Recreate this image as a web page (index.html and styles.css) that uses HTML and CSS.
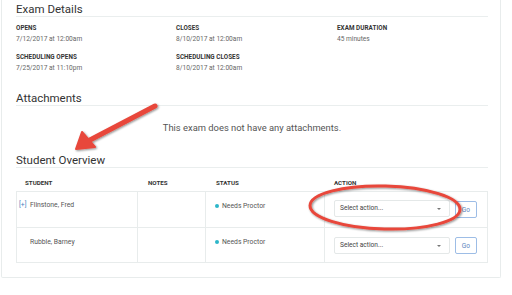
FILE: index.html
```html
<!DOCTYPE html>
<html>
<head>
<meta charset="utf-8">
<link rel="stylesheet" href="styles.css">
</head>
<body>
<div class="card">
  <section class="sec">
    <h2 class="sec-title">Exam Details</h2>
    <div class="grid">
      <div class="field"><div class="lbl">OPENS</div><div class="val">7/12/2017 at 12:00am</div></div>
      <div class="field"><div class="lbl">CLOSES</div><div class="val">8/10/2017 at 12:00am</div></div>
      <div class="field"><div class="lbl">EXAM DURATION</div><div class="val">45 minutes</div></div>
      <div class="field"><div class="lbl">SCHEDULING OPENS</div><div class="val">7/25/2017 at 11:10pm</div></div>
      <div class="field"><div class="lbl">SCHEDULING CLOSES</div><div class="val">8/10/2017 at 12:00am</div></div>
    </div>
  </section>
  <section class="sec attach">
    <h2 class="sec-title">Attachments</h2>
    <p class="empty">This exam does not have any attachments.</p>
  </section>
  <section class="sec overview">
    <h2 class="sec-title">Student Overview</h2>
    <div class="table">
      <div class="thead">
        <div class="th c1">STUDENT</div>
        <div class="th c2">NOTES</div>
        <div class="th c3">STATUS</div>
        <div class="th c4">ACTION</div>
      </div>
      <div class="tbody">
        <div class="tr">
          <div class="td c1"><span class="plus">[+]</span><span class="name">Flinstone, Fred</span></div>
          <div class="td c2"></div>
          <div class="td c3"><span class="dot"></span>Needs Proctor</div>
          <div class="td c4"><div class="select">Select action...<span class="caret"></span></div><button class="go">Go</button></div>
        </div>
        <div class="tr">
          <div class="td c1"><span class="plus blank"></span><span class="name">Rubble, Barney</span></div>
          <div class="td c2"></div>
          <div class="td c3"><span class="dot"></span>Needs Proctor</div>
          <div class="td c4"><div class="select">Select action...<span class="caret"></span></div><button class="go">Go</button></div>
        </div>
      </div>
    </div>
  </section>
</div>
<svg class="annot" width="512" height="295" viewBox="0 0 512 295">
  <defs>
    <filter id="sh" x="-20%" y="-20%" width="140%" height="140%">
      <feGaussianBlur in="SourceAlpha" stdDeviation="1"/>
      <feOffset dx="0.5" dy="1" result="b"/>
      <feComponentTransfer><feFuncA type="linear" slope="0.45"/></feComponentTransfer>
      <feMerge><feMergeNode/><feMergeNode in="SourceGraphic"/></feMerge>
    </filter>
  </defs>
  <g filter="url(#sh)">
    <line x1="155" y1="106" x2="88" y2="141" stroke="#e8473b" stroke-width="5" stroke-linecap="round"/>
    <polygon points="76,149 82,132 95,147" fill="#e8473b" stroke="#e8473b" stroke-width="2" stroke-linejoin="round"/>
  </g>
  <g filter="url(#sh)">
    <ellipse cx="385" cy="207.5" rx="75" ry="21.5" fill="none" stroke="#e8473b" stroke-width="3" transform="rotate(1.5 385 207.5)"/>
  </g>
</svg>
</body>
</html>
```
FILE: styles.css
```css
html, body {
  margin: 0;
  padding: 0;
  background: #fff;
}
body {
  font-family: Roboto, "Liberation Sans", sans-serif;
  color: #333;
  width: 512px;
  height: 295px;
  overflow: hidden;
  position: relative;
}
.card {
  margin-left: 1px;
  width: 500px;
  height: 278px;
  border: 1px solid #e8ecec;
  border-top: none;
  border-radius: 0 0 2px 2px;
  padding: 2px 13px 0 14px;
  box-sizing: border-box;
}
.sec-title {
  margin: 0;
  font-size: 11.5px;
  font-weight: 400;
  line-height: 14px;
  color: #333;
  border-bottom: 1px solid #eaeeee;
  width: 472px;
}
.grid {
  display: grid;
  grid-template-columns: 160px 161px auto;
  row-gap: 7px;
  padding-top: 6px;
}
.lbl {
  font-size: 6.3px;
  font-weight: 700;
  line-height: 10px;
  color: #333;
  letter-spacing: 0.05px;
}
.val {
  font-size: 6.6px;
  line-height: 12px;
  color: #666;
}
.attach {
  margin-top: 17px;
}
.empty {
  margin: 15px 0 0;
  width: 472px;
  text-align: center;
  font-size: 9.4px;
  line-height: 14px;
  color: #555;
}
.overview {
  margin-top: 18px;
}
.table {
  width: 472px;
}
.thead {
  display: grid;
  grid-template-columns: 122px 68px 119px auto;
  height: 23px;
  box-sizing: border-box;
  padding-top: 10px;
}
.th {
  font-size: 6.2px;
  font-weight: 700;
  line-height: 10px;
  color: #333;
  padding-left: 9px;
}
.th.c2, .th.c3 { padding-left: 10px; }
.tbody {
  border: 1px solid #e8ecec;
}
.tr {
  display: grid;
  grid-template-columns: 121px 68px 119px auto;
  height: 35px;
  box-sizing: border-box;
}
.tr + .tr {
  border-top: 1px solid #e8ecec;
}
.td {
  border-right: 1px solid #e8ecec;
  font-size: 6.8px;
  color: #555;
  line-height: 10px;
  box-sizing: border-box;
}
.td.c4 { border-right: none; }
.td.c1 {
  padding: 8px 0 0 2px;
  display: flex;
  align-items: flex-start;
}
.plus {
  width: 11px;
  color: #4a7fc1;
  font-size: 6.8px;
}
.name { color: #555; }
.td.c3 {
  padding: 9px 0 0 9px;
  display: flex;
  align-items: flex-start;
}
.dot {
  width: 4px;
  height: 4px;
  border-radius: 50%;
  background: #2db6c9;
  margin: 3px 3px 0 0;
  flex: none;
}
.td.c4 {
  display: flex;
  align-items: flex-start;
  padding: 8px 0 0 9px;
}
.select {
  width: 116px;
  height: 17px;
  box-sizing: border-box;
  border: 1px solid #e4e8e8;
  border-radius: 2px;
  font-size: 6.6px;
  line-height: 15px;
  color: #444;
  padding-left: 5px;
  position: relative;
}
.caret {
  position: absolute;
  right: 8px;
  top: 7px;
  border-left: 2px solid transparent;
  border-right: 2px solid transparent;
  border-top: 2px solid #777;
}
.go {
  margin: 1px 0 0 5px;
  width: 22px;
  height: 17px;
  box-sizing: border-box;
  border: 1px solid #9dbde6;
  border-radius: 2px;
  background: #fff;
  color: #5a86c0;
  font-family: Roboto, "Liberation Sans", sans-serif;
  font-size: 6.6px;
  padding: 0;
}
.tr + .tr .td.c1 { padding-top: 9px; }
.tr + .tr .td.c4 { padding-top: 9px; }
.tr + .tr .go { margin-top: 0; }
.annot {
  position: absolute;
  left: 0;
  top: 0;
  pointer-events: none;
}
```
